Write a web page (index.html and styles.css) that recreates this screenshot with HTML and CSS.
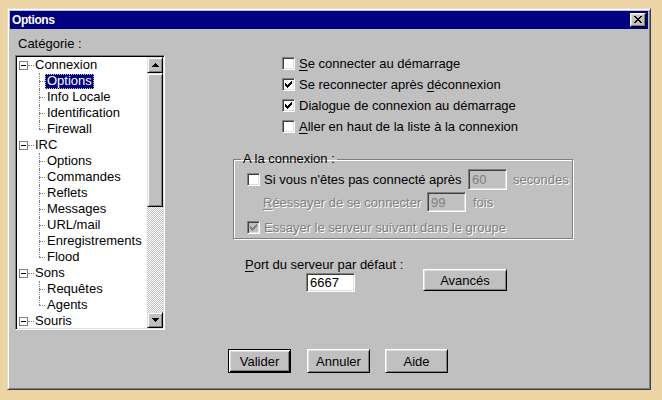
FILE: index.html
```html
<!DOCTYPE html>
<html lang="fr">
<head>
<meta charset="utf-8">
<title>Options</title>
<link rel="stylesheet" href="styles.css">
</head>
<body>
<div class="window">
  <div class="titlebar">
    <span class="title-text">Options</span>
    <span class="close"><svg width="8" height="7" viewBox="0 0 8 7"><path fill="#000" d="M0 0h2v1H0z M6 0h2v1H6z M1 1h2v1H1z M5 1h2v1H5z M2 2h4v1H2z M3 3h2v1H3z M2 4h4v1H2z M1 5h2v1H1z M5 5h2v1H5z M0 6h2v1H0z M6 6h2v1H6z"/></svg></span>
  </div>
  <div class="main">
    <div class="left">
      <div class="cat-label">Catégorie :</div>
      <div class="tree">
        <div class="tree-list">
          <div class="node root"><span class="exp"></span><span class="hline"></span><span class="lbl">Connexion</span></div>
          <div class="node child"><span class="conn"><i></i><b></b></span><span class="lbl sel">Options</span></div>
          <div class="node child"><span class="conn"><i></i><b></b></span><span class="lbl">Info Locale</span></div>
          <div class="node child"><span class="conn"><i></i><b></b></span><span class="lbl">Identification</span></div>
          <div class="node child last"><span class="conn"><i></i><b></b></span><span class="lbl">Firewall</span></div>
          <div class="node root"><span class="exp"></span><span class="hline"></span><span class="lbl">IRC</span></div>
          <div class="node child"><span class="conn"><i></i><b></b></span><span class="lbl">Options</span></div>
          <div class="node child"><span class="conn"><i></i><b></b></span><span class="lbl">Commandes</span></div>
          <div class="node child"><span class="conn"><i></i><b></b></span><span class="lbl">Reflets</span></div>
          <div class="node child"><span class="conn"><i></i><b></b></span><span class="lbl">Messages</span></div>
          <div class="node child"><span class="conn"><i></i><b></b></span><span class="lbl">URL/mail</span></div>
          <div class="node child"><span class="conn"><i></i><b></b></span><span class="lbl">Enregistrements</span></div>
          <div class="node child last"><span class="conn"><i></i><b></b></span><span class="lbl">Flood</span></div>
          <div class="node root"><span class="exp"></span><span class="hline"></span><span class="lbl">Sons</span></div>
          <div class="node child"><span class="conn"><i></i><b></b></span><span class="lbl">Requêtes</span></div>
          <div class="node child last"><span class="conn"><i></i><b></b></span><span class="lbl">Agents</span></div>
          <div class="node root"><span class="exp"></span><span class="hline"></span><span class="lbl">Souris</span></div>
        </div>
        <div class="vscroll">
          <span class="sb-btn"><svg width="7" height="4" viewBox="0 0 7 4"><path fill="#000" d="M3 0h1v1h1v1h1v1h1v1H0V3h1V2h1V1h1z"/></svg></span>
          <span class="thumb"></span>
          <span class="track"></span>
          <span class="sb-btn"><svg width="7" height="4" viewBox="0 0 7 4"><path fill="#000" d="M0 0h7v1H6v1H5v1H4v1H3V3H2V2H1V1H0z"/></svg></span>
        </div>
      </div>
    </div>
    <div class="right">
      <div class="checks">
        <div class="cb-row"><span class="cb"></span><span><u>S</u>e connecter au démarrage</span></div>
        <div class="cb-row"><span class="cb"><svg width="7" height="7" viewBox="0 0 7 7"><path fill="#000" d="M6 0h1v1H6z M5 1h2v1H5z M0 2h1v1H0z M4 2h3v1H4z M0 3h2v1H0z M3 3h3v1H3z M0 4h5v1H0z M1 5h3v1H1z M2 6h1v1H2z"/></svg></span><span>Se reconnecter après <u>d</u>éconnexion</span></div>
        <div class="cb-row"><span class="cb"><svg width="7" height="7" viewBox="0 0 7 7"><path fill="#000" d="M6 0h1v1H6z M5 1h2v1H5z M0 2h1v1H0z M4 2h3v1H4z M0 3h2v1H0z M3 3h3v1H3z M0 4h5v1H0z M1 5h3v1H1z M2 6h1v1H2z"/></svg></span><span>Dialo<u>g</u>ue de connexion au démarrage</span></div>
        <div class="cb-row"><span class="cb"></span><span><u>A</u>ller en haut de la liste à la connexion</span></div>
      </div>
      <fieldset class="group">
        <legend class="legend">A la connexion :</legend>
        <div class="g-row r1"><span class="cb"></span><span class="txt">Si vous n'êtes pas connecté après</span><span class="field dis">60</span><span class="dis-text after">secondes</span></div>
        <div class="g-row r2"><span class="dis-text txt"><u>R</u>éessayer de se connecter</span><span class="field dis">99</span><span class="dis-text after">fois</span></div>
        <div class="g-row r3"><span class="cb dis"><svg width="7" height="7" viewBox="0 0 7 7"><path fill="#808080" d="M6 0h1v1H6z M5 1h2v1H5z M0 2h1v1H0z M4 2h3v1H4z M0 3h2v1H0z M3 3h3v1H3z M0 4h5v1H0z M1 5h3v1H1z M2 6h1v1H2z"/></svg></span><span class="dis-text txt">Essayer le serveur suivant dans le groupe</span></div>
      </fieldset>
      <div class="port">
        <div class="port-left">
          <div class="port-label"><u>P</u>ort du serveur par défaut :</div>
          <div class="field port-input">6667</div>
        </div>
        <span class="btn btn-adv">Avancés</span>
      </div>
    </div>
  </div>
  <div class="buttons">
    <span class="btn default">Valider</span>
    <span class="btn b-annuler">Annuler</span>
    <span class="btn b-aide">Aide</span>
  </div>
</div>
</body>
</html>
```
FILE: styles.css
```css
* { box-sizing: border-box; }
html, body { margin: 0; padding: 0; }
body {
  background: #ecd4a4;
  font-family: "Liberation Sans", Arial, sans-serif;
  font-size: 13px;
  color: #000;
  width: 662px;
  height: 400px;
  overflow: hidden;
}
u { text-decoration: underline; text-underline-offset: 2px; }

.window {
  margin: 8px 0 0 7px;
  width: 644px;
  height: 382px;
  background: #c0c0c0;
  border: 1px solid;
  border-color: #dfdfdf #404040 #404040 #dfdfdf;
  box-shadow: inset 1px 1px #fff, inset -1px -1px #808080;
  padding: 2px;
  display: flex;
  flex-direction: column;
}

.titlebar {
  height: 18px;
  flex: none;
  background: #000080;
  display: flex;
  align-items: center;
  justify-content: space-between;
  padding: 0 2px;
}
.title-text {
  color: #fff;
  font-weight: bold;
  font-size: 12px;
  letter-spacing: -0.4px;
}
.close {
  width: 16px;
  height: 14px;
  background: #c0c0c0;
  border: 1px solid;
  border-color: #fff #000 #000 #fff;
  box-shadow: inset -1px -1px #808080, inset 1px 1px #dfdfdf;
  display: flex;
  align-items: center;
  justify-content: center;
}
.close svg { display: block; margin-top: -1px; }

.main {
  height: 301px;
  flex: none;
  display: flex;
}

.left {
  width: 150px;
  margin: 7px 0 0 5px;
  flex: none;
}
.cat-label {
  line-height: 16px;
  padding-left: 3px;
  margin-bottom: 3px;
}
.tree {
  height: 275px;
  display: flex;
  background: #fff;
  border: 1px solid;
  border-color: #808080 #fff #fff #808080;
  box-shadow: inset 1px 1px #000, inset -1px -1px #dfdfdf;
  padding: 1px;
}
.tree-list {
  flex: 1;
  overflow: hidden;
}
.node {
  height: 16px;
  display: flex;
  align-items: center;
  white-space: nowrap;
}
.exp {
  width: 9px;
  height: 9px;
  flex: none;
  margin-left: 2px;
  border: 1px solid #808080;
  background: #fff;
  display: flex;
  align-items: center;
  justify-content: center;
}
.exp::before {
  content: "";
  width: 5px;
  height: 1px;
  background: #000;
}
.hline {
  width: 6px;
  height: 0;
  flex: none;
  border-top: 1px dotted #808080;
}
.lbl {
  line-height: 14px;
  height: 15px;
  padding: 0 1px;
}
.child .lbl { padding: 0 2px; }
.lbl.sel {
  background: #000080;
  color: #fff;
  outline: 1px dotted #c8c8a0;
  outline-offset: -1px;
}
.conn {
  width: 6px;
  height: 16px;
  flex: none;
  margin-left: 22px;
  display: flex;
  flex-direction: column;
}
.conn i {
  display: block;
  height: 8px;
  border-left: 1px dotted #808080;
}
.conn b {
  display: block;
  height: 8px;
  border-left: 1px dotted #808080;
  border-top: 1px dotted #808080;
}
.last .conn b { border-left: none; }

.vscroll {
  width: 16px;
  flex: none;
  display: flex;
  flex-direction: column;
}
.sb-btn, .thumb {
  background: #c0c0c0;
  border: 1px solid;
  border-color: #dfdfdf #000 #000 #dfdfdf;
  box-shadow: inset 1px 1px #fff, inset -1px -1px #808080;
}
.sb-btn {
  height: 16px;
  flex: none;
  display: flex;
  align-items: center;
  justify-content: center;
}
.sb-btn svg { display: block; }
.thumb { height: 134px; flex: none; }
.track {
  flex: 1;
  background-color: #fff;
  background-image: conic-gradient(#c0c0c0 0 25%, transparent 0 50%, #c0c0c0 0 75%, transparent 0);
  background-size: 2px 2px;
}

.right {
  flex: 1;
  display: flex;
  flex-direction: column;
}
.checks { margin: 24px 0 0 117px; }
.cb-row {
  height: 21px;
  display: flex;
  align-items: center;
  gap: 4px;
  white-space: nowrap;
}
.cb {
  width: 13px;
  height: 13px;
  flex: none;
  background: #fff;
  border: 1px solid;
  border-color: #808080 #fff #fff #808080;
  box-shadow: inset 1px 1px #404040, inset -1px -1px #dfdfdf;
}
.cb svg { display: block; margin: 2px 0 0 2px; }
.cb.dis { background: #c0c0c0; }

.group {
  margin: 14px 0 0 68px;
  width: 340px;
  min-width: 0;
  border: 1px solid #808080;
  box-shadow: inset 1px 1px #fff, 1px 1px #fff;
  padding: 2px 0 3px 0;
}
.legend {
  margin-left: 7px;
  padding: 0 2px;
  line-height: 16px;
}
.g-row {
  display: flex;
  align-items: center;
  white-space: nowrap;
}
.r1 { height: 21px; margin-left: 13px; }
.r1 .txt { margin-left: 4px; width: 204px; }
.r2 { height: 20px; margin: 2px 0 0 29px; }
.r2 .txt { width: 164px; }
.r3 { height: 16px; margin: 7px 0 0 13px; }
.r3 .txt { margin-left: 4px; }
.r2 .after { margin-left: 7px; }
.r1 .after { margin-left: 6px; }

.dis-text {
  color: #808080;
  text-shadow: 1px 1px #fff;
}
.field {
  height: 100%;
  width: 39px;
  background: #fff;
  border: 1px solid;
  border-color: #808080 #fff #fff #808080;
  box-shadow: inset 1px 1px #404040, inset -1px -1px #dfdfdf;
  padding-left: 3px;
  display: flex;
  align-items: center;
}
.field.dis {
  background: #c0c0c0;
  color: #808080;
}

.port {
  display: flex;
  margin: 18px 0 0 80px;
}
.port-left { width: 178px; }
.port-label { line-height: 16px; }
.port-input {
  width: 49px;
  height: 19px;
  margin-left: 61px;
}
.btn {
  display: flex;
  align-items: center;
  justify-content: center;
  background: #c0c0c0;
  border: 1px solid;
  border-color: #fff #000 #000 #fff;
  box-shadow: inset 1px 1px #dfdfdf, inset -1px -1px #808080;
}
.btn-adv {
  width: 84px;
  height: 22px;
  margin-top: 12px;
}

.buttons {
  display: flex;
  margin: 19px 0 0 218px;
}
.buttons .btn {
  width: 63px;
  height: 24px;
}
.btn.default {
  border-color: #000;
  box-shadow: inset 1px 1px #fff, inset -1px -1px #000, inset 2px 2px #dfdfdf, inset -2px -2px #808080;
}
.b-annuler { margin-left: 16px; }
.b-aide { margin-left: 15px; }
```
